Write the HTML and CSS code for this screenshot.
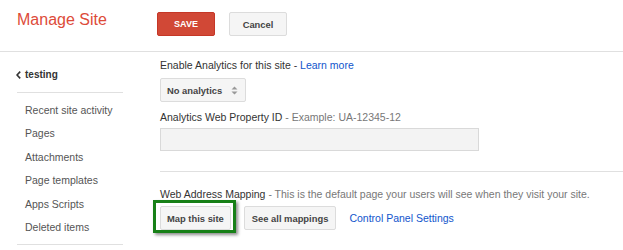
FILE: index.html
```html
<!DOCTYPE html>
<html lang="en">
<head>
    <meta charset="UTF-8">
    <title>Manage Site</title>
    <link rel="stylesheet" href="styles.css">
</head>
<body>
    <header class="header">
        <h1 class="title">Manage Site</h1>
        <div class="header-actions">
            <button class="btn btn-save">SAVE</button>
            <button class="btn">Cancel</button>
        </div>
    </header>

    <div class="page">
        <aside class="sidebar">
            <div class="site-name">
                <svg class="chevron" width="5" height="8" viewBox="0 0 5 8">
                    <path d="M4.2 0.6 L1 4 L4.2 7.4" fill="none" stroke="#333" stroke-width="1.6"/>
                </svg>
                testing
            </div>
            <ul class="side-links">
                <li>Recent site activity</li>
                <li>Pages</li>
                <li>Attachments</li>
                <li>Page templates</li>
                <li>Apps Scripts</li>
                <li>Deleted items</li>
            </ul>
        </aside>

        <main class="main">
            <div class="section">
                <div class="label">Enable Analytics for this site - <a href="#">Learn more</a></div>
                <div class="select">
                    No analytics
                    <svg width="7" height="9" viewBox="0 0 7 9">
                        <path d="M3.5 0.5 L6.5 3.5 H0.5 Z M3.5 8.5 L6.5 5.5 H0.5 Z" fill="#999"/>
                    </svg>
                </div>
                <div class="label label-second">Analytics Web Property ID <span class="muted">- Example: UA-12345-12</span></div>
                <div class="text-input"></div>
            </div>

            <div class="section section-mapping">
                <div class="label">Web Address Mapping <span class="muted">- This is the default page your users will see when they visit your site.</span></div>
                <div class="mapping-actions">
                    <div class="highlight">
                        <button class="btn btn-map">Map this site</button>
                    </div>
                    <button class="btn">See all mappings</button>
                    <a href="#" class="panel-link">Control Panel Settings</a>
                </div>
            </div>
        </main>
    </div>
</body>
</html>
```

FILE: styles.css
```css
body {
    margin: 0;
    padding: 0;
    font-family: "Liberation Sans", Arial, sans-serif;
    background-color: white;
    color: #333;
}
.header {
    display: flex;
    align-items: flex-start;
    height: 51px;
    padding: 0 0 0 17px;
    border-bottom: 1px solid #e0e0e0;
}
.title {
    width: 140px;
    margin: 10px 0 0;
    font-size: 16px;
    line-height: 20px;
    font-weight: normal;
    color: #dd4b39;
}
.header-actions {
    display: flex;
    gap: 14px;
    margin-top: 12px;
}
.btn {
    height: 24px;
    padding: 0 7px;
    border: 1px solid #dcdcdc;
    border-radius: 2px;
    background-color: #f5f5f5;
    color: #444;
    font-family: "Liberation Sans", Arial, sans-serif;
    font-size: 9.4px;
    font-weight: bold;
    white-space: nowrap;
    cursor: pointer;
}
.header-actions .btn {
    width: 58px;
}
.btn-save {
    background-color: #d14836;
    border-color: #c53727;
    color: white;
    font-size: 9px;
}
.page {
    display: flex;
}
.sidebar {
    width: 106px;
    padding: 16px 37px 0 17px;
}
.site-name {
    display: flex;
    align-items: center;
    gap: 4px;
    padding: 0 0 10px 0;
    font-size: 10px;
    font-weight: bold;
    line-height: 14px;
    border-bottom: 1px solid #e0e0e0;
}
.chevron {
    margin-left: -1px;
}
.side-links {
    list-style: none;
    margin: 0;
    padding: 6px 0 5px 8px;
    border-bottom: 1px solid #e0e0e0;
}
.side-links li {
    font-size: 10.5px;
    line-height: 23.4px;
    color: #555;
}
.main {
    flex: 1;
}
.section {
    padding: 6px 0 20px;
    border-bottom: 1px solid #e0e0e0;
}
.label {
    font-size: 10.5px;
    line-height: 14px;
    color: #333;
    white-space: nowrap;
}
.label a,
.panel-link {
    color: #15c;
    text-decoration: none;
}
.muted {
    color: #777;
}
.select {
    display: flex;
    align-items: center;
    gap: 9px;
    box-sizing: border-box;
    width: 86px;
    height: 24px;
    margin-top: 6px;
    padding: 0 6px;
    border: 1px solid #dcdcdc;
    border-radius: 2px;
    background-color: #f5f5f5;
    color: #444;
    font-size: 9.4px;
    font-weight: bold;
    white-space: nowrap;
}
.label-second {
    margin-top: 8px;
}
.text-input {
    box-sizing: border-box;
    width: 319px;
    height: 23px;
    margin-top: 4px;
    border: 1px solid #d9d9d9;
    background-color: #f3f3f3;
}
.section-mapping {
    padding-top: 15px;
    border-bottom: none;
}
.mapping-actions {
    display: flex;
    align-items: center;
    gap: 13px;
    margin-top: 5px;
}
.highlight {
    position: relative;
    display: flex;
}
.highlight::after {
    content: "";
    position: absolute;
    left: -7px;
    top: -6px;
    right: -5px;
    bottom: -3px;
    border: 3px solid #178017;
    box-shadow: 2px 2px 3px rgba(0,0,0,0.45);
}
.btn-map {
    padding: 0 6px;
}
.panel-link {
    font-size: 10.5px;
}
```
